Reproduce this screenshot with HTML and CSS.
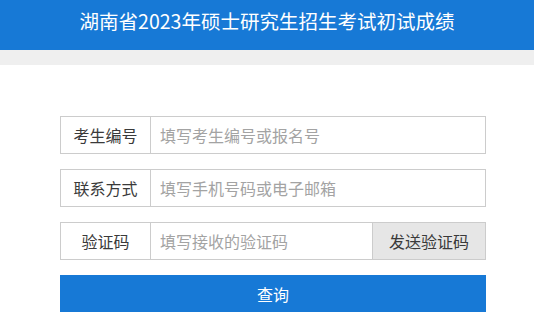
FILE: index.html
```html
<!DOCTYPE html>
<html lang="zh">
<head>
<meta charset="utf-8">
<link rel="stylesheet" href="styles.css">
</head>
<body>
<div class="header">湖南省2023年硕士研究生招生考试初试成绩</div>
<div class="strip"></div>
<form class="form">
  <div class="row">
    <label class="label">考生编号</label>
    <input class="input" type="text" placeholder="填写考生编号或报名号">
  </div>
  <div class="row">
    <label class="label">联系方式</label>
    <input class="input" type="text" placeholder="填写手机号码或电子邮箱">
  </div>
  <div class="row">
    <label class="label">验证码</label>
    <input class="input" type="text" placeholder="填写接收的验证码">
    <button type="button" class="send">发送验证码</button>
  </div>
  <button type="button" class="submit">查询</button>
</form>
</body>
</html>
```
FILE: styles.css
```css
* { box-sizing: border-box; }
body {
  margin: 0;
  font-family: "Noto Sans CJK SC", "Noto Sans", sans-serif;
  background: #fff;
}
.header {
  height: 50px;
  background: #1779d6;
  color: #fff;
  font-size: 19.5px;
  line-height: 42px;
  text-align: center;
}
.strip {
  height: 15px;
  background: #efefef;
}
.form {
  width: 426px;
  margin: 51px 0 0 60px;
  display: flex;
  flex-direction: column;
  gap: 15px;
}
.row {
  display: flex;
  height: 38px;
  border: 1px solid #ccc;
}
.label {
  width: 90px;
  flex: none;
  border-right: 1px solid #ccc;
  font-size: 16px;
  color: #3a3a3a;
  display: flex;
  align-items: center;
  justify-content: center;
}
.input {
  flex: 1;
  min-width: 0;
  border: none;
  outline: none;
  padding: 0 9px;
  font-family: inherit;
  font-size: 16px;
  color: #333;
}
.input::placeholder { color: #a3a3a3; }
.send {
  width: 113px;
  flex: none;
  border: none;
  border-left: 1px solid #ccc;
  background: #e6e6e6;
  font-family: inherit;
  font-size: 16px;
  color: #3a3a3a;
  padding: 0;
}
.submit {
  height: 37px;
  border: none;
  background: #1779d6;
  color: #fff;
  font-family: inherit;
  font-size: 16px;
  padding: 0;
}
```
